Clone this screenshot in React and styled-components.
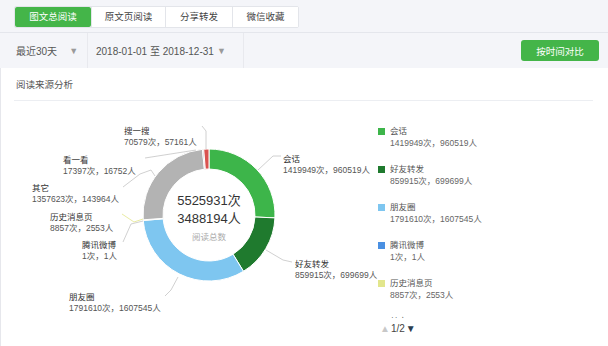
import styled, { createGlobalStyle } from 'styled-components';

const GlobalStyle = createGlobalStyle`
  body {
    margin: 0;
    background: #fff;
    font-family: "Liberation Sans", "Noto Sans CJK SC", sans-serif;
  }
`;

const Page = styled.div`
  width: 608px;
  height: 346px;
  overflow: hidden;
  background: #f4f5f9;
  display: flex;
  flex-direction: column;
`;

const TabBar = styled.div`
  height: 32px;
  box-sizing: border-box;
  padding: 6px 14px 0;
  display: flex;
  align-items: flex-start;
`;

const Tabs = styled.div`
  display: flex;
  background: #fff;
  border: 1px solid #e3e5ea;
  border-radius: 2px;
`;

const Tab = styled.div`
  width: ${(props) => props.w}px;
  height: 20px;
  line-height: 20px;
  text-align: center;
  font-size: 9.5px;
  color: ${(props) => (props.active ? '#fff' : '#444')};
  background: ${(props) => (props.active ? '#44b549' : '#fff')};
  border-left: ${(props) => (props.first ? 'none' : '1px solid #e3e5ea')};
  border-radius: ${(props) => (props.active ? '2px' : '0')};
`;

const FilterBar = styled.div`
  height: 35px;
  border-top: 1px solid #e4e6ec;
  display: flex;
  align-items: stretch;
  font-size: 10px;
  color: #555;
`;

const FilterCell = styled.div`
  width: ${(props) => props.w}px;
  padding-left: ${(props) => props.pl}px;
  box-sizing: border-box;
  border-right: 1px solid #e8e9ee;
  display: flex;
  align-items: center;
  gap: ${(props) => props.gap}px;
`;

const Caret = styled.span`
  color: #9a9a9a;
  font-size: 9px;
`;

const Spacer = styled.div`
  flex: 1;
`;

const CompareButton = styled.button`
  align-self: center;
  margin-right: 9px;
  width: 78px;
  height: 21px;
  border: none;
  border-radius: 3px;
  background: #44b549;
  color: #fff;
  font-size: 9.5px;
  font-family: inherit;
  padding: 0;
`;

const Panel = styled.div`
  flex: 1;
  background: #fff;
  border-left: 1px solid #e6e7ec;
  display: flex;
  flex-direction: column;
`;

const PanelHeader = styled.div`
  margin: 0 15px 0 13px;
  height: 33px;
  box-sizing: border-box;
  border-bottom: 1px solid #eceef2;
  padding: 0 0 0 2px;
  display: flex;
  align-items: center;
  font-size: 9.5px;
  color: #555;
`;

const PanelBody = styled.div`
  display: flex;
  padding-left: 13px;
`;

const Chart = styled.svg`
  width: 364px;
  height: 245px;
  display: block;
  overflow: visible;
  font-family: "Liberation Sans", "Noto Sans CJK SC", sans-serif;
`;

const Legend = styled.div`
  padding-top: 25px;
  display: flex;
  flex-direction: column;
`;

const LegendList = styled.div`
  height: 192px;
  overflow: hidden;
`;

const LegendItem = styled.div`
  height: 38px;
  display: flex;
  gap: 5px;
`;

const Swatch = styled.span`
  width: 7px;
  height: 7px;
  margin-top: 2px;
  background: ${(props) => props.color};
`;

const LegendText = styled.div`
  font-size: 8.5px;
  line-height: 12px;
  margin-top: -1px;
`;

const LegendName = styled.div`
  color: #555;
`;

const LegendValue = styled.div`
  color: #666;
`;

const Pager = styled.div`
  margin-top: 5px;
  margin-left: 2px;
  font-size: 10px;
  line-height: 12px;
  color: #444;
  display: flex;
  align-items: center;
  gap: 1px;
`;

const PagerArrow = styled.span`
  font-size: 10px;
  color: ${(props) => (props.on ? '#2c3e50' : '#c8c8c8')};
`;

const sources = [
  { name: '会话', reads: 1419949, users: 960519, color: '#3db54a' },
  { name: '好友转发', reads: 859915, users: 699699, color: '#1f7a2e' },
  { name: '朋友圈', reads: 1791610, users: 1607545, color: '#7ec6f0' },
  { name: '腾讯微博', reads: 1, users: 1, color: '#4a90e2' },
  { name: '历史消息页', reads: 8857, users: 2553, color: '#e2e68c' },
  { name: '其它', reads: 1357623, users: 143964, color: '#b3b3b3' },
  { name: '看一看', reads: 17397, users: 16752, color: '#9a9a9a' },
  { name: '搜一搜', reads: 70579, users: 57161, color: '#d9534f' },
];

// legend page 1 of 2 (the sixth entry peeks out under the fold)
const PAGE_SIZE = 6;

// label spots and leader lines, in page coordinates
const labels = {
  会话: { x: 283, y: 159, line: '258,170 273,156 281,156' },
  好友转发: { x: 295, y: 264, line: '266,250 283,260 292,262' },
  朋友圈: { x: 69, y: 297, line: '165,296 171,290 178,277' },
  腾讯微博: { x: 82, y: 245, line: '123,242 131,224 143,221' },
  历史消息页: { x: 50, y: 217, line: '122,214 134,222 143,219', stroke: '#e2e68c' },
  其它: { x: 32, y: 188, line: '123,187 140,174 151,170 155,176' },
  看一看: { x: 63, y: 160, line: '145,158 196,150' },
  搜一搜: { x: 124, y: 131, line: '206,149 206,131 202,126' },
};

const CX = 209;
const CY = 215;
const R_OUT = 66;
const R_IN = 46;

const pt = (r, deg) => {
  const a = ((deg - 90) * Math.PI) / 180;
  return [CX + r * Math.cos(a), CY + r * Math.sin(a)];
};

const arc = (from, to) => {
  const big = to - from > 180 ? 1 : 0;
  const [x1, y1] = pt(R_OUT, from);
  const [x2, y2] = pt(R_OUT, to);
  const [x3, y3] = pt(R_IN, to);
  const [x4, y4] = pt(R_IN, from);
  return `M${x1} ${y1} A${R_OUT} ${R_OUT} 0 ${big} 1 ${x2} ${y2} L${x3} ${y3} A${R_IN} ${R_IN} 0 ${big} 0 ${x4} ${y4} Z`;
};

const fmt = (s) => `${s.reads}次，${s.users}人`;

const Donut = () => {
  const total = sources.reduce((sum, s) => sum + s.reads, 0);
  let angle = 0;
  const slices = sources.map((s) => {
    const from = angle;
    angle += (s.reads / total) * 360;
    return { ...s, from, to: angle };
  });

  return (
    <Chart viewBox="0 0 364 245">
      <g transform="translate(-14,-101)">
        {slices
          .filter((s) => s.to - s.from > 0.05)
          .map((s) => (
            <path key={s.name} d={arc(s.from, s.to)} fill={s.color} stroke="#fff" strokeWidth="1" />
          ))}
        {sources.map((s) => {
          const l = labels[s.name];
          return (
            <g key={s.name}>
              <polyline points={l.line} fill="none" stroke={l.stroke || '#c4c4c4'} strokeWidth="0.8" />
              <text x={l.x} y={l.y + 3} fontSize="8.5" fill="#333">{s.name}</text>
              <text x={l.x} y={l.y + 14} fontSize="8.5" fill="#555">{fmt(s)}</text>
            </g>
          );
        })}
        <text x={CX} y={205} fontSize="13" fill="#333" textAnchor="middle">{total}次</text>
        <text x={CX} y={223} fontSize="13" fill="#333" textAnchor="middle">3488194人</text>
        <text x={CX} y={240} fontSize="8.5" fill="#aaa" textAnchor="middle">阅读总数</text>
      </g>
    </Chart>
  );
};

const tabs = [
  { label: '图文总阅读', w: 76 },
  { label: '原文页阅读', w: 73 },
  { label: '分享转发', w: 66 },
  { label: '微信收藏', w: 65 },
];

const App = () => {
  return (
    <>
      <GlobalStyle />
      <Page>
        <TabBar>
          <Tabs>
            {tabs.map((t, i) => (
              <Tab key={t.label} w={t.w} active={i === 0} first={i === 0}>
                {t.label}
              </Tab>
            ))}
          </Tabs>
        </TabBar>
        <FilterBar>
          <FilterCell w={88} pl={16} gap={12}>
            最近30天 <Caret>▼</Caret>
          </FilterCell>
          <FilterCell w={156} pl={8} gap={3}>
            2018-01-01 至 2018-12-31 <Caret>▼</Caret>
          </FilterCell>
          <Spacer />
          <CompareButton>按时间对比</CompareButton>
        </FilterBar>
        <Panel>
          <PanelHeader>阅读来源分析</PanelHeader>
          <PanelBody>
            <Donut />
            <Legend>
              <LegendList>
                {sources.slice(0, PAGE_SIZE).map((s) => (
                  <LegendItem key={s.name}>
                    <Swatch color={s.color} />
                    <LegendText>
                      <LegendName>{s.name}</LegendName>
                      <LegendValue>{fmt(s)}</LegendValue>
                    </LegendText>
                  </LegendItem>
                ))}
              </LegendList>
              <Pager>
                <PagerArrow>▲</PagerArrow>1/2<PagerArrow on>▼</PagerArrow>
              </Pager>
            </Legend>
          </PanelBody>
        </Panel>
      </Page>
    </>
  );
};

export default App;
